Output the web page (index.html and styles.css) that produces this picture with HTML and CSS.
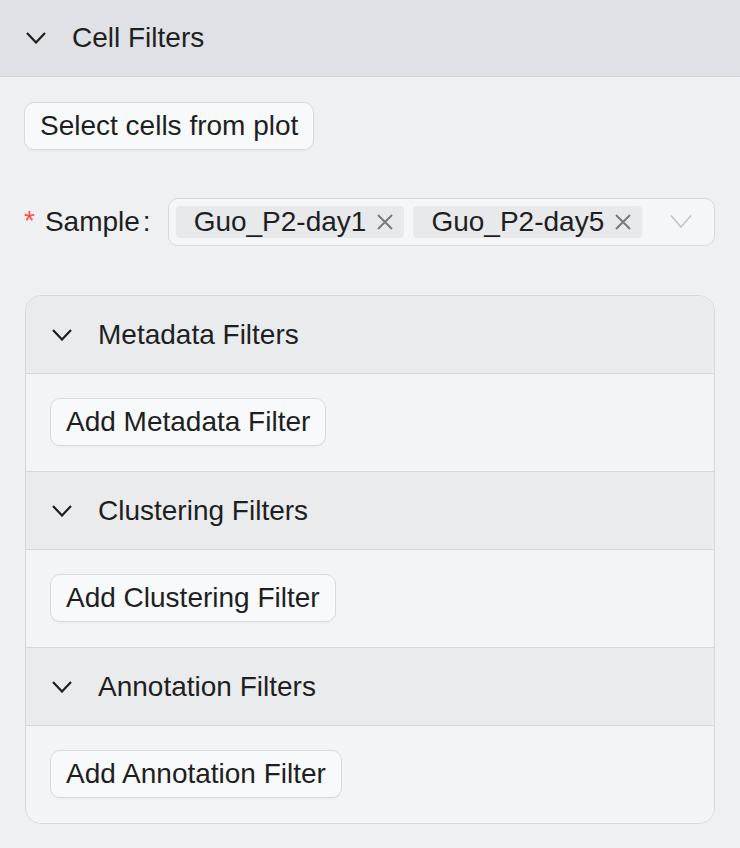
FILE: index.html
```html
<!DOCTYPE html>
<html>
<head>
  <title>Cell Filters</title>
  <link rel="stylesheet" href="styles.css">
</head>
<body>
<div class="panel">
  <div class="panel-header">
    <svg class="chevron" width="20" height="12" viewBox="0 0 20 12"><polyline points="1,1 10,10.5 19,1" /></svg>
    <span>Cell Filters</span>
  </div>
  <div class="panel-body">
    <button class="btn">Select cells from plot</button>

    <div class="form-row">
      <label class="form-label"><span class="required">*</span>Sample<span class="colon">:</span></label>
      <div class="select">
        <span class="tag">Guo_P2-day1<svg class="tag-close" width="18" height="18" viewBox="0 0 18 18"><path d="M2 2 L16 16 M16 2 L2 16" /></svg></span>
        <span class="tag">Guo_P2-day5<svg class="tag-close" width="18" height="18" viewBox="0 0 18 18"><path d="M2 2 L16 16 M16 2 L2 16" /></svg></span>
        <svg class="select-arrow" width="22" height="15" viewBox="0 0 22 15"><polyline points="1,1.5 11,13 21,1.5" /></svg>
      </div>
    </div>

    <div class="collapse">
      <div class="collapse-header">
        <svg class="chevron" width="20" height="12" viewBox="0 0 20 12"><polyline points="1,1 10,10.5 19,1" /></svg>
        <span>Metadata Filters</span>
      </div>
      <div class="collapse-content">
        <button class="btn">Add Metadata Filter</button>
      </div>
      <div class="collapse-header">
        <svg class="chevron" width="20" height="12" viewBox="0 0 20 12"><polyline points="1,1 10,10.5 19,1" /></svg>
        <span>Clustering Filters</span>
      </div>
      <div class="collapse-content">
        <button class="btn">Add Clustering Filter</button>
      </div>
      <div class="collapse-header">
        <svg class="chevron" width="20" height="12" viewBox="0 0 20 12"><polyline points="1,1 10,10.5 19,1" /></svg>
        <span>Annotation Filters</span>
      </div>
      <div class="collapse-content last">
        <button class="btn">Add Annotation Filter</button>
      </div>
    </div>
  </div>
</div>
</body>
</html>
```

FILE: styles.css
```css
body {
  margin: 0;
  overflow: hidden;
  font-family: "Liberation Sans", Arial, sans-serif;
  font-size: 28px;
  color: #1f1f1f;
  background-color: #eef0f2;
}
.panel {
  margin: -8px -8px 0 -8px;
  height: 870px;
  border: 1px solid #d6d8dc;
  border-radius: 20px;
  background-color: #eef0f2;
  overflow: hidden;
}
.panel-header {
  display: flex;
  align-items: center;
  gap: 26px;
  padding: 29px 33px 22px 33px;
  line-height: 32px;
  background-color: #dfe1e6;
  border-bottom: 1px solid #d3d5d9;
}
.chevron polyline {
  fill: none;
  stroke: #1f1f1f;
  stroke-width: 2.2;
}
.panel-body {
  padding: 25px 32px 0 31px;
}
.btn {
  display: inline-block;
  height: 48px;
  padding: 0 15px;
  font-family: inherit;
  font-size: 28px;
  line-height: 46px;
  color: #1f1f1f;
  background-color: #f8f9fa;
  border: 1px solid #d9d9d9;
  border-radius: 10px;
  box-shadow: 0 2px 0 rgba(0,0,0,0.02);
  cursor: pointer;
}
.form-row {
  display: flex;
  align-items: center;
  margin-top: 48px;
  height: 48px;
}
.form-label {
  display: flex;
  align-items: center;
  margin-right: 17px;
  line-height: 32px;
}
.required {
  color: #ff4d4f;
  margin-right: 10px;
  position: relative;
  top: -1px;
}
.colon {
  margin-left: 3px;
}
.select {
  flex: 1;
  display: flex;
  align-items: center;
  gap: 9px;
  height: 46px;
  padding: 0 7px;
  border: 1px solid #d9d9d9;
  border-radius: 10px;
  background-color: #f5f6f8;
  position: relative;
}
.tag {
  display: flex;
  align-items: center;
  height: 32px;
  line-height: 32px;
  padding: 0 10px 0 18px;
  background-color: #e8e9eb;
  border-radius: 4px;
}
.tag-close {
  margin-left: 10px;
}
.tag-close path {
  stroke: #7a7a7a;
  stroke-width: 2;
}
.select-arrow {
  position: absolute;
  right: 22px;
  top: 15px;
}
.select-arrow polyline {
  fill: none;
  stroke: #c4c4c4;
  stroke-width: 1.6;
}
.collapse {
  margin: 49px 0 0 1px;
  border: 1px solid #d6d8dc;
  border-radius: 16px;
  overflow: hidden;
  background-color: #f3f4f6;
}
.collapse-header {
  display: flex;
  align-items: center;
  gap: 26px;
  height: 77px;
  padding: 0 26px;
  line-height: 32px;
  background-color: #eaebed;
  border-bottom: 1px solid #d6d8dc;
}
.collapse-content {
  padding: 24px 24px 25px 24px;
  background-color: #f3f4f6;
  border-bottom: 1px solid #d6d8dc;
}
.collapse-content.last {
  border-bottom: none;
}
```
